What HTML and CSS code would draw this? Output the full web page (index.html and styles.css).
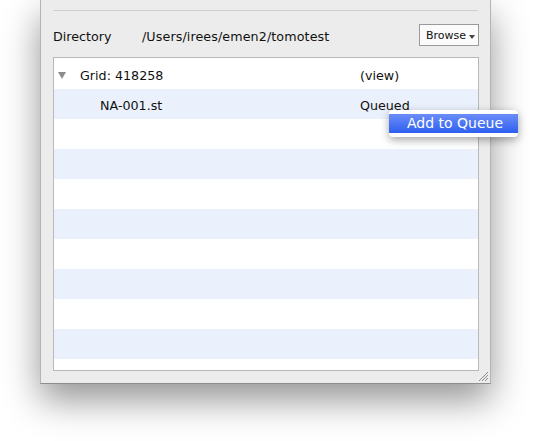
FILE: index.html
```html
<!DOCTYPE html>
<html lang="en">
<head>
  <meta charset="UTF-8">
  <title>Tomography Queue</title>
  <link rel="stylesheet" href="styles.css">
</head>
<body>
  <div class="window">
    <div class="separator"></div>

    <div class="dir-row">
      <span class="dir-label">Directory</span>
      <span class="dir-path">/Users/irees/emen2/tomotest</span>
      <button class="browse">Browse <span class="caret"></span></button>
    </div>

    <div class="tree">
      <div class="row">
        <span class="disclosure"></span>
        <span class="name">Grid: 418258</span>
        <span class="status">(view)</span>
      </div>
      <div class="row child">
        <span class="name">NA-001.st</span>
        <span class="status">Queued</span>
      </div>
      <div class="row"></div>
      <div class="row"></div>
      <div class="row"></div>
      <div class="row"></div>
      <div class="row"></div>
      <div class="row"></div>
      <div class="row"></div>
      <div class="row"></div>
      <div class="row"></div>
    </div>

    <!-- resize grip, bottom right corner -->
    <svg class="grip" width="11" height="11" viewBox="0 0 11 11">
      <path d="M10 1 L1 10 M10 4 L4 10 M10 7 L7 10" stroke="#8a8a8a" stroke-width="1" fill="none"/>
    </svg>

    <div class="menu">
      <div class="menu-item">Add to Queue</div>
    </div>
  </div>
</body>
</html>
```

FILE: styles.css
```css
body {
  margin: 0;
  background: #ffffff;
  font-family: "DejaVu Sans", sans-serif;
  font-size: 12.7px;
  color: #111;
  height: 441px;
  overflow: hidden;
}

.window {
  position: relative;
  margin-left: 40px;
  width: 451px;
  height: 384px;
  background: #ececec;
  border: 1px solid #b4b4b4;
  border-top: none;
  border-bottom-color: #8e8e8e;
  box-shadow: 0 16px 34px rgba(0, 0, 0, 0.42);
  padding: 10px 12px 0 12px;
  box-sizing: border-box;
}

.separator {
  height: 1px;
  background: #cfcfcf;
}

.dir-row {
  display: flex;
  align-items: center;
  height: 22px;
  margin-top: 13px;
}

.dir-label {
  width: 89px;
  padding-top: 2px;
}

.dir-path {
  flex: 1;
  padding-top: 2px;
  letter-spacing: 0.1px;
}

.browse {
  width: 60px;
  height: 22px;
  margin-right: -1px;
  border: 1px solid #9a9a9a;
  background: #fbfbfb;
  font-family: inherit;
  font-size: 11px;
  color: #111;
  padding: 0 0 0 6px;
  display: flex;
  align-items: center;
  gap: 3px;
}

.caret {
  width: 0;
  height: 0;
  margin-top: 3px;
  border-left: 3px solid transparent;
  border-right: 3px solid transparent;
  border-top: 4px solid #444;
}

.tree {
  margin-top: 11px;
  width: 426px;
  height: 314px;
  box-sizing: border-box;
  border: 1px solid #b9b9b9;
  padding-top: 1px;
  background: #fff;
  overflow: hidden;
}

.row {
  display: grid;
  grid-template-columns: 26px 280px 1fr;
  align-items: center;
  height: 30px;
  padding-top: 2px;
  box-sizing: border-box;
}

.row:nth-child(even) {
  background: #ebf1fc;
}

.disclosure {
  justify-self: start;
  width: 0;
  height: 0;
  margin-left: 4px;
  border-left: 4px solid transparent;
  border-right: 4px solid transparent;
  border-top: 7px solid #8c8c8c;
}

.name {
  grid-column: 2;
}

.child .name {
  padding-left: 20px;
}

.status {
  grid-column: 3;
}

.grip {
  position: absolute;
  right: 1px;
  bottom: 1px;
}

.menu {
  position: absolute;
  left: 348px;
  top: 110px;
  width: 129px;
  padding: 4px 0;
  background: #fff;
  border-radius: 4px;
  box-shadow: 0 3px 8px rgba(0, 0, 0, 0.35);
}

.menu-item {
  height: 19px;
  line-height: 19px;
  padding-left: 18px;
  font-size: 14px;
  color: #fff;
  background: linear-gradient(#6b8df8, #2f5ff0);
}
```
